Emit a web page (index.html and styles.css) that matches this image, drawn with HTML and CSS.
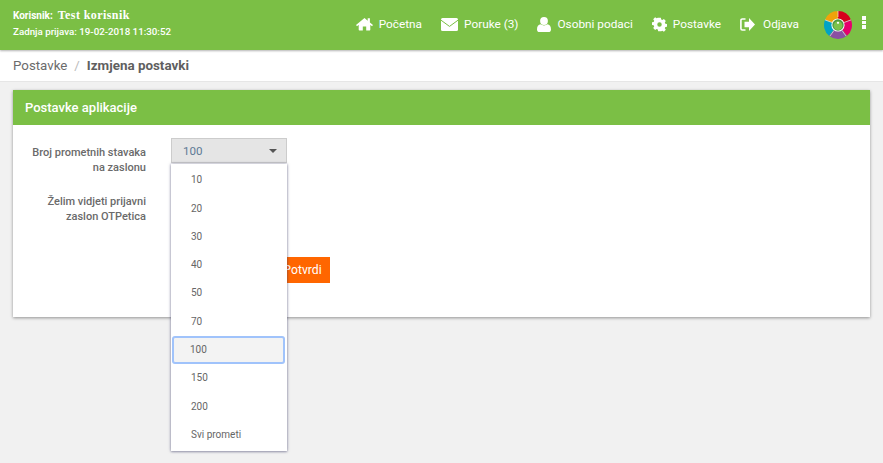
FILE: index.html
```html
<!DOCTYPE html>
<html lang="hr">
<head>
<meta charset="utf-8">
<title>Postavke</title>
<link rel="stylesheet" href="styles.css">
</head>
<body>
<header class="topbar">
  <div class="user">
    <div class="user-line"><b class="user-label">Korisnik:</b><span class="user-name">Test korisnik</span></div>
    <div class="user-last">Zadnja prijava: 19-02-2018 11:30:52</div>
  </div>
  <nav class="nav">
    <a class="nav-item"><svg class="ico" width="17" height="14" viewBox="0 0 17 14"><path fill="#fff" d="M8.500 2.600 2.700 7.400v5.400c0 .4.3.7.7.7h3.400V9.400h3.400v4.100h3.400c.4 0 .7-.3.7-.7V7.400zM13.900 5.600V1.200h-2.200v2.500L8.500.9 0 8l1 1.200 7.500-6.300L16 9.200 17 8z"/></svg>Početna</a>
    <a class="nav-item"><svg class="ico" width="17" height="13" viewBox="0 0 17 13"><rect fill="#fff" width="17" height="13" rx="1.500"/><path fill="none" stroke="#7bbf45" stroke-width="1" d="M0 2.200 8.500 8.400 17 2.200"/></svg>Poruke (3)</a>
    <a class="nav-item"><svg class="ico" width="14" height="15" viewBox="0 0 14 15"><circle fill="#fff" cx="7" cy="4" r="3.900"/><path fill="#fff" d="M3.600 7.300C4.500 8 5.700 8.400 7 8.400s2.500-.4 3.400-1.100C12.600 7.600 14 9 14 12.400c0 1.600-1 2.600-2.500 2.600h-9C1 15 0 14 0 12.400 0 9 1.400 7.600 3.600 7.300z"/></svg>Osobni podaci</a>
    <a class="nav-item"><svg class="ico" width="15" height="15" viewBox="0 0 15 15"><path fill="#fff" fill-rule="evenodd" d="M6 0h3l.4 2 1.300.6L12.400 1.500l2.100 2.100-1.100 1.700.6 1.300 2 .4v3l-2 .4-.6 1.300 1.100 1.700-2.100 2.100-1.700-1.100-1.300.6L9 15H6l-.4-2-1.300-.6-1.700 1.100L.5 11.400l1.100-1.700L1 8.400-1 8V5l2-.4.600-1.300L.5 1.600 2.600-.5l1.700 1.100 1.300-.6zM7.500 5a2.500 2.500 0 1 0 0 5 2.500 2.500 0 0 0 0-5z" transform="translate(.75 .75) scale(.9)"/></svg>Postavke</a>
    <a class="nav-item nav-last"><svg class="ico" width="15" height="13" viewBox="0 0 15 13"><path fill="#fff" d="M9 0 15 6.500 9 13V9.300H4.500V3.700H9z"/><path fill="none" stroke="#fff" stroke-width="1.600" d="M5.500 1H2.300C1.500 1 .9 1.600.9 2.400v8.200c0 .8.600 1.400 1.400 1.400h3.200"/></svg>Odjava</a>
  </nav>
  <svg class="logo" width="28" height="28" viewBox="0 0 28 28">
    <g fill="none" stroke-width="8">
      <path stroke="#d6001c" d="M14 4A10 10 0 0 1 23.270 10.250"/>
      <path stroke="#e5006d" d="M23.270 10.250A10 10 0 0 1 20.430 21.660"/>
      <path stroke="#8a4fa3" d="M20.430 21.660A10 10 0 0 1 7.570 21.660"/>
      <path stroke="#00a3c4" d="M7.570 21.660A10 10 0 0 1 4.730 10.250"/>
      <path stroke="#f0a30a" d="M4.730 10.250A10 10 0 0 1 14 4"/>
    </g>
    <path stroke="#e8e8e8" stroke-width=".7" d="M14 0V6M27 8.900 20 11.500M22 25 18 19.500M6 25 10 19.500M1 8.900 8 11.500"/>
    <circle fill="#fff" cx="14" cy="14" r="6.600"/>
    <circle fill="#4f9a44" cx="14" cy="14" r="5.700"/>
    <circle fill="#7cc34a" cx="14" cy="14.600" r="4.400"/>
    <circle fill="#fff" cx="14" cy="11.800" r="1.100"/>
  </svg>
  <div class="kebab"><i></i><i></i><i></i></div>
</header>
<div class="crumbs"><span class="crumb">Postavke</span><span class="crumb-sep">/</span><b class="crumb-current">Izmjena postavki</b></div>
<main class="content">
  <section class="card">
    <h2 class="card-head">Postavke aplikacije</h2>
    <div class="card-body">
      <div class="row">
        <label class="label">Broj prometnih stavaka<br>na zaslonu</label>
        <div class="select-wrap">
          <div class="select"><span>100</span><i class="caret"></i></div>
          <ul class="menu">
            <li>10</li><li>20</li><li>30</li><li>40</li><li>50</li><li>70</li>
            <li class="active">100</li><li>150</li><li>200</li><li>Svi prometi</li>
          </ul>
        </div>
      </div>
      <div class="row row-second">
        <label class="label">Želim vidjeti prijavni<br>zaslon OTPetica</label>
      </div>
      <div class="actions"><button class="submit">Potvrdi</button></div>
    </div>
  </section>
</main>
</body>
</html>
```
FILE: styles.css
```css
* { box-sizing: border-box; }
html, body { margin: 0; height: 100%; }
body { background: #f1f1f1; font-family: Roboto, "Liberation Sans", sans-serif; color: #666; overflow: hidden; }
.topbar { height: 50px; background: #7bbf45; color: #fff; display: flex; align-items: center; padding: 0 17px 0 13px; box-shadow: 0 1px 2px rgba(0,0,0,.3); position: relative; }
.user { flex: 1; padding-bottom: 5px; }
.user-line { display: flex; align-items: baseline; gap: 5px; height: 17px; }
.user-label { font-size: 10px; font-weight: 700; }
.user-name { font-family: "Liberation Serif", serif; font-size: 12px; font-weight: 700; letter-spacing: .42px; }
.user-last { font-size: 9.750px; font-weight: 500; margin-top: 1px; line-height: 12px; }
.nav { display: flex; align-items: center; gap: 19px; font-size: 11.800px; padding-bottom: 2px; }
.nav-item { display: flex; align-items: center; gap: 6px; color: #fff; }
.nav-last { gap: 8px; }
.ico { display: block; }
.logo { margin-left: 25px; }
.kebab { margin-left: 10px; display: flex; flex-direction: column; gap: 1px; width: 4px; margin-bottom: 5px; }
.kebab i { display: block; width: 4px; height: 3.670px; background: #fff; }
.crumbs { height: 32px; background: #fff; border-bottom: 1px solid #e6e6e6; display: flex; align-items: center; padding-left: 13px; font-size: 13.300px; color: #6b6b6b; }
.crumb-sep { color: #bbb; margin: 0 7px; }
.crumb-current { font-weight: 700; font-size: 13.400px; color: #5f5f5f; }
.content { padding: 8px 13px 0; }
.card { background: #fff; height: 227px; box-shadow: 0 1px 3px rgba(0,0,0,.4); }
.card-head { margin: 0; height: 35px; background: #7bbf45; color: #fff; font-size: 13px; font-weight: 500; line-height: 35px; padding-left: 12px; }
.card-body { padding-top: 13px; position: relative; }
.row { display: flex; align-items: flex-start; }
.row-second { margin-top: 12px; }
.label { width: 133px; text-align: right; font-size: 11px; font-weight: 500; line-height: 15px; color: #6a6a6a; padding-top: 7px; }
.select-wrap { margin-left: 25px; position: relative; width: 116px; }
.select { height: 25px; background: #e5e5e5; border: 1px solid #ccc; display: flex; align-items: center; justify-content: space-between; padding: 1px 9px 0 11px; font-size: 11.600px; color: #5d7a95; }
.caret { width: 0; height: 0; border-left: 4px solid transparent; border-right: 4px solid transparent; border-top: 4px solid #555; }
.menu { list-style: none; margin: 0; padding: 2.300px 0 0; position: absolute; left: 0; top: 26px; width: 116px; height: 287px; background: #fff; box-shadow: 0 0 3px rgba(60,60,100,.55), 0 1px 2px rgba(60,60,100,.3); font-size: 10px; z-index: 5; }
.menu li { height: 28.300px; line-height: 28px; padding-left: 20px; color: #666; }
.menu li.active { margin: 1px 3px 1.300px 2px; padding-left: 16px; height: 26px; line-height: 24px; background: #f3f3f3; border: 1px solid #a0c3fb; border-radius: 2px; box-shadow: 0 0 0 1px #a0c3fb; }
.actions { margin-top: 33px; margin-left: 241px; }
.submit { display: block; width: 76px; height: 26px; background: #ff6600; border: 0; color: #fff; font-family: inherit; font-size: 12.200px; padding: 0 0 0 21px; }
```
